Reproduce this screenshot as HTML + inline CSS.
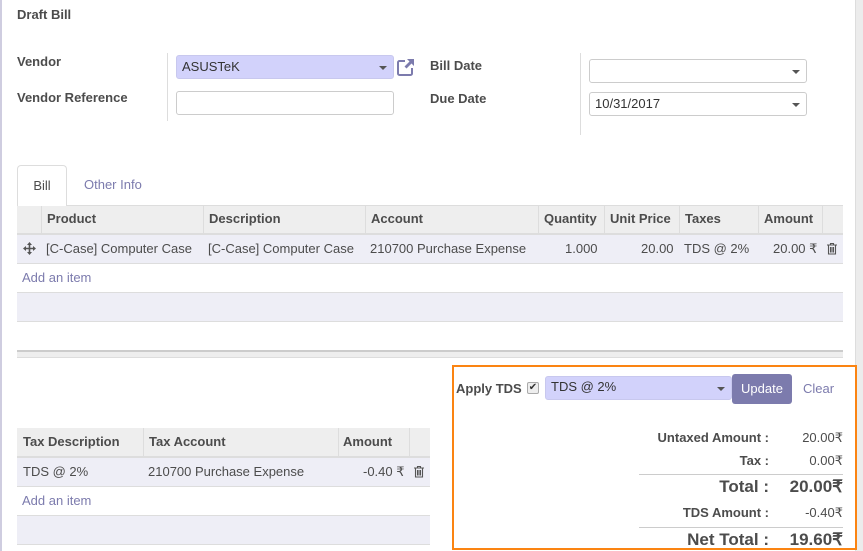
<!DOCTYPE html>
<html><head><meta charset="utf-8"><style>
*{box-sizing:border-box;margin:0;padding:0}
body{width:863px;height:551px;overflow:hidden;background:#fff;font-family:"Liberation Sans",sans-serif;font-size:13px;color:#4c4c4c;position:relative}
.a{position:absolute;white-space:nowrap}
.b{font-weight:bold}
.lbl{font-weight:bold;color:#4c4c4c}
.inp{position:absolute;border:1px solid #ccc;border-radius:3px;height:24px;background:#fff;padding:3px 5px;color:#333}
.car{position:absolute;right:6px;top:10px;border-left:4px solid transparent;border-right:4px solid transparent;border-top:4px solid #555}
.cell{position:absolute;top:0;height:100%;border-left:1px solid #ddd}
.link{color:#7c7bad}
</style></head><body>
<div class="a" style="left:0;top:0;width:2px;height:551px;background:#cfcde0"></div>
<div class="a" style="left:855px;top:0;width:8px;height:551px;background:#ececec;border-left:1px solid #ddd"></div>

<div class="a b" style="left:17px;top:7px">Draft Bill</div>
<div class="a lbl" style="left:17px;top:54px">Vendor</div>
<div class="a lbl" style="left:17px;top:90px">Vendor Reference</div>
<div class="a" style="left:167px;top:53px;width:1px;height:68px;background:#ddd"></div>
<div class="inp" style="left:176px;top:55px;width:218px;background:#d2d2fb;border-color:#c8c8ee">ASUSTeK<div class="car"></div></div>
<svg class="a" style="left:396px;top:57px" width="20" height="20" viewBox="0 0 20 20"><path d="M9 4H3.5a1.5 1.5 0 0 0-1.5 1.5v11A1.5 1.5 0 0 0 3.5 18h11a1.5 1.5 0 0 0 1.5-1.5V11" fill="none" stroke="#7c7bad" stroke-width="2"/><path d="M11 2h7v7l-2.5-2.5-5 5-2-2 5-5z" fill="#7c7bad"/></svg>
<div class="inp" style="left:176px;top:91px;width:218px"></div>
<div class="a lbl" style="left:430px;top:58px">Bill Date</div>
<div class="a lbl" style="left:430px;top:91px">Due Date</div>
<div class="a" style="left:580px;top:53px;width:1px;height:82px;background:#ddd"></div>
<div class="inp" style="left:589px;top:59px;width:218px"><div class="car"></div></div>
<div class="inp" style="left:589px;top:92px;width:218px">10/31/2017<div class="car"></div></div>

<div class="a" style="left:17px;top:165px;width:50px;height:41px;border:1px solid #ddd;border-bottom:none;border-radius:4px 4px 0 0;background:#fff;z-index:2;text-align:center;padding-top:12px">Bill</div>
<div class="a link" style="left:84px;top:177px">Other Info</div>

<div class="a" style="left:17px;top:205px;width:826px;height:30px;background:#eee;border-top:1px solid #ddd;border-bottom:2px solid #ddd">
<div class="cell" style="left:24px"></div><div class="cell" style="left:186px"></div><div class="cell" style="left:348px"></div><div class="cell" style="left:521px"></div><div class="cell" style="left:587px"></div><div class="cell" style="left:662px"></div><div class="cell" style="left:741px"></div><div class="cell" style="left:805px"></div>
<div class="a b" style="left:30px;top:5px">Product</div><div class="a b" style="left:192px;top:5px">Description</div><div class="a b" style="left:354px;top:5px">Account</div><div class="a b" style="left:527px;top:5px">Quantity</div><div class="a b" style="left:593px;top:5px">Unit Price</div><div class="a b" style="left:668px;top:5px">Taxes</div><div class="a b" style="left:747px;top:5px">Amount</div>
</div>
<div class="a" style="left:17px;top:235px;width:826px;height:29px;background:#eeeef6;border-bottom:1px solid #ddd">
<svg class="a" style="left:6px;top:7px" width="13" height="13" viewBox="0 0 13 13"><path d="M6.5 0l2.5 3H7.3v2.7H10V4l3 2.5-3 2.5V7.3H7.3V10H9l-2.5 3-2.5-3h1.7V7.3H3V9L0 6.5 3 4v1.7h2.7V3H4z" fill="#555"/></svg>
<div class="a" style="left:29px;top:6px">[C-Case] Computer Case</div>
<div class="a" style="left:191px;top:6px">[C-Case] Computer Case</div>
<div class="a" style="left:353px;top:6px">210700 Purchase Expense</div>
<div class="a" style="left:548px;top:6px">1.000</div>
<div class="a" style="left:624px;top:6px">20.00</div>
<div class="a" style="left:667px;top:6px">TDS @ 2%</div>
<div class="a" style="left:756px;top:6px">20.00 ₹</div>
<svg class="a" style="left:810px;top:8px" width="10" height="12" viewBox="0 0 10 12"><path d="M0 2h10M3.5 2V0.5h3V2M1.5 2.5v8.5h7V2.5M3.5 4v5.5M5 4v5.5M6.5 4v5.5" fill="none" stroke="#555" stroke-width="1.1"/></svg>
</div>
<div class="a link" style="left:22px;top:270px">Add an item</div>
<div class="a" style="left:17px;top:292px;width:826px;height:30px;background:#eeeef6;border-top:1px solid #ddd;border-bottom:1px solid #ddd"></div>
<div class="a" style="left:17px;top:350px;width:826px;height:8px;background:#eee;border-top:2px solid #ccc;border-bottom:1px solid #ddd"></div>

<div class="a" style="left:17px;top:428px;width:413px;height:30px;background:#eee;border-bottom:2px solid #ddd">
<div class="cell" style="left:126px"></div><div class="cell" style="left:321px"></div><div class="cell" style="left:392px"></div>
<div class="a b" style="left:6px;top:6px">Tax Description</div><div class="a b" style="left:132px;top:6px">Tax Account</div><div class="a b" style="left:326px;top:6px">Amount</div>
</div>
<div class="a" style="left:17px;top:458px;width:413px;height:29px;background:#eeeef6;border-bottom:1px solid #ddd">
<div class="a" style="left:6px;top:6px">TDS @ 2%</div><div class="a" style="left:131px;top:6px">210700 Purchase Expense</div><div class="a" style="left:346px;top:6px">-0.40 ₹</div>
<svg class="a" style="left:397px;top:8px" width="10" height="12" viewBox="0 0 10 12"><path d="M0 2h10M3.5 2V0.5h3V2M1.5 2.5v8.5h7V2.5M3.5 4v5.5M5 4v5.5M6.5 4v5.5" fill="none" stroke="#555" stroke-width="1.1"/></svg>
</div>
<div class="a link" style="left:22px;top:493px">Add an item</div>
<div class="a" style="left:17px;top:515px;width:413px;height:30px;background:#eeeef6;border-top:1px solid #ddd;border-bottom:1px solid #ddd"></div>

<div class="a" style="left:452px;top:365px;width:405px;height:185px;border:2px solid #fb8412"></div>
<div class="a b" style="left:456px;top:381px">Apply TDS</div>
<div class="a" style="left:527px;top:382px;width:12px;height:12px;border:1px solid #aaa;border-radius:2px;background:#eee;font-size:10px;line-height:10px;text-align:center;color:#333">✔</div>
<div class="inp" style="left:545px;top:376px;width:187px;height:24px;background:#d2d2fb;border-color:#c8c8ee;padding:2px 5px">TDS @ 2%<div class="car"></div></div>
<div class="a" style="left:732px;top:374px;width:60px;height:30px;background:#7c7bad;border-radius:3px;color:#fff;text-align:center;line-height:29px">Update</div>
<div class="a link" style="left:803px;top:381px">Clear</div>

<div class="a b" style="left:600px;width:169px;top:430px;text-align:right">Untaxed Amount :</div>
<div class="a" style="left:760px;width:83px;top:430px;text-align:right">20.00₹</div>
<div class="a b" style="left:600px;width:169px;top:453px;text-align:right">Tax :</div>
<div class="a" style="left:760px;width:83px;top:453px;text-align:right">0.00₹</div>
<div class="a" style="left:639px;top:474px;width:204px;height:1px;background:#ccc"></div>
<div class="a b" style="left:600px;width:169px;top:477px;text-align:right;font-size:17px">Total :</div>
<div class="a b" style="left:760px;width:83px;top:477px;text-align:right;font-size:17px">20.00₹</div>
<div class="a b" style="left:600px;width:169px;top:505px;text-align:right">TDS Amount :</div>
<div class="a" style="left:760px;width:83px;top:505px;text-align:right">-0.40₹</div>
<div class="a" style="left:639px;top:527px;width:204px;height:1px;background:#ccc"></div>
<div class="a b" style="left:600px;width:169px;top:530px;text-align:right;font-size:17px">Net Total :</div>
<div class="a b" style="left:760px;width:83px;top:530px;text-align:right;font-size:17px">19.60₹</div>
</body></html>
